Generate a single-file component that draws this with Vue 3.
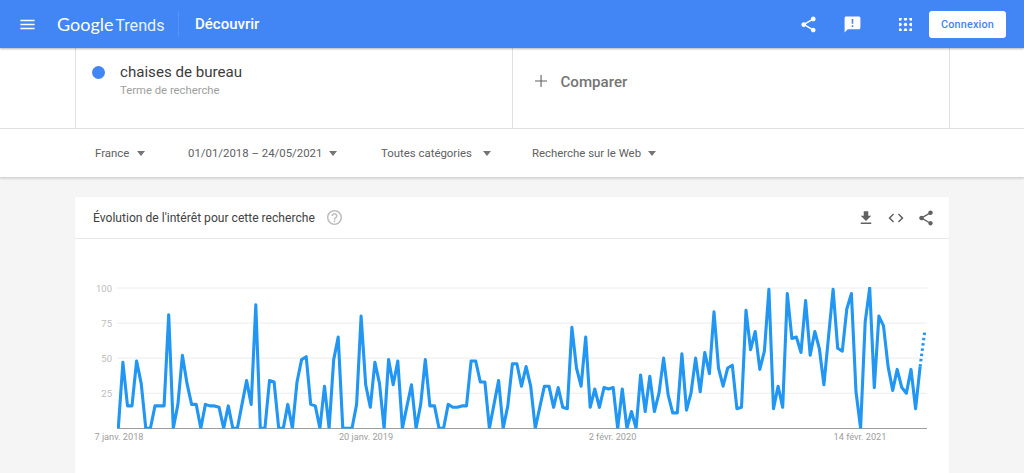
<script setup>
import { computed } from 'vue'

// weekly interest values, read off the chart
const values = [
  0, 47, 16, 16, 48, 32, 0, 0, 16, 16, 16, 81, 0, 17, 52, 32, 17, 17, 0, 17,
  16, 16, 15, 0, 16, 0, 0, 17, 34, 17, 88, 0, 0, 34, 33, 0, 0, 17, 0, 33,
  49, 51, 17, 16, 0, 30, 0, 49, 65, 0, 0, 0, 17, 80, 31, 15, 47, 32, 0, 49,
  31, 48, 0, 16, 31, 0, 17, 49, 16, 16, 0, 0, 17, 15, 15, 16, 16, 48, 48, 33,
  33, 0, 17, 34, 0, 16, 46, 46, 30, 44, 30, 0, 15, 30, 30, 15, 29, 15, 14, 72,
  43, 30, 65, 15, 28, 15, 29, 28, 29, 0, 28, 0, 12, 0, 38, 12, 37, 12, 25, 50,
  24, 11, 11, 53, 13, 25, 50, 26, 54, 39, 83, 43, 30, 43, 45, 14, 15, 84, 56, 69,
  42, 55, 99, 14, 30, 15, 96, 64, 65, 54, 91, 52, 69, 57, 31, 65, 99, 57, 55, 85,
  96, 26, 0, 76, 100, 29, 80, 73, 44, 27, 42, 29, 25, 42, 14, 44, 69,
]

const filters = ['France', '01/01/2018 – 24/05/2021', 'Toutes catégories', 'Recherche sur le Web']
const yTicks = [100, 75, 50, 25]
const xTicks = [
  { label: '7 janv. 2018', x: 119 },
  { label: '20 janv. 2019', x: 366 },
  { label: '2 févr. 2020', x: 612.5 },
  { label: '14 févr. 2021', x: 860 },
]

const yFor = (v) => 428.3 - v * 1.403
const toPoint = (v, i) => `${(118.3 + i * 4.582).toFixed(1)},${yFor(v).toFixed(1)}`

const solidLine = computed(() => values.slice(0, -1).map(toPoint).join(' '))
const partialLine = computed(() => {
  const last = values.length - 1
  return [toPoint(values[last - 1], last - 1), toPoint(values[last], last)].join(' ')
})
</script>

<template>
  <div class="page">
    <header class="topbar">
      <svg class="menu-icon" viewBox="0 0 24 24"><path d="M3 18h18v-2H3v2zm0-5h18v-2H3v2zm0-7v2h18V6H3z" /></svg>
      <div class="logo"><span class="logo-google">Google</span> <span class="logo-trends">Trends</span></div>
      <span class="divider"></span>
      <span class="page-title">Découvrir</span>
      <div class="top-actions">
        <svg class="top-icon share" viewBox="0 0 24 24"><path d="M18 16.08c-.76 0-1.44.3-1.96.77L8.91 12.7c.05-.23.09-.46.09-.7s-.04-.47-.09-.7l7.05-4.11c.54.5 1.25.81 2.04.81 1.66 0 3-1.34 3-3s-1.34-3-3-3-3 1.34-3 3c0 .24.04.47.09.7L8.04 9.81C7.5 9.31 6.79 9 6 9c-1.66 0-3 1.34-3 3s1.34 3 3 3c.79 0 1.5-.31 2.04-.81l7.12 4.16c-.05.21-.08.43-.08.65 0 1.61 1.31 2.92 2.92 2.92 1.61 0 2.92-1.31 2.92-2.92s-1.31-2.92-2.92-2.92z" /></svg>
        <svg class="top-icon feedback" viewBox="0 0 24 24"><path d="M20 2H4c-1.1 0-1.99.9-1.99 2L2 22l4-4h14c1.1 0 2-.9 2-2V4c0-1.1-.9-2-2-2zm-7 9h-2V5h2v6zm0 4h-2v-2h2v2z" /></svg>
        <svg class="top-icon apps" viewBox="0 0 12 12">
          <template v-for="row in 3" :key="row">
            <circle v-for="col in 3" :key="col" :cx="col * 5 - 4" :cy="row * 5 - 4" r="1.6" />
          </template>
        </svg>
        <button class="login">Connexion</button>
      </div>
    </header>

    <section class="search-panel">
      <div class="search-row">
        <div class="term">
          <span class="term-dot"></span>
          <div>
            <div class="term-name">chaises de bureau</div>
            <div class="term-type">Terme de recherche</div>
          </div>
        </div>
        <div class="compare">
          <svg class="plus" viewBox="0 0 12 12"><path d="M5.5 0h1.1v5.5H12v1.1H6.6V12H5.5V6.6H0V5.5h5.5z" /></svg>
          <span>Comparer</span>
        </div>
      </div>
      <div class="filters">
        <div v-for="f in filters" :key="f" class="filter">
          <span>{{ f }}</span>
          <i class="caret"></i>
        </div>
      </div>
    </section>

    <main class="content">
      <section class="card">
        <div class="card-head">
          <span class="card-title">Évolution de l'intérêt pour cette recherche</span>
          <svg class="help" viewBox="2 2 20 20"><path d="M11 18h2v-2h-2v2zm1-16C6.48 2 2 6.48 2 12s4.48 10 10 10 10-4.48 10-10S17.52 2 12 2zm0 18c-4.41 0-8-3.59-8-8s3.59-8 8-8 8 3.59 8 8-3.59 8-8 8zm0-14c-2.21 0-4 1.79-4 4h2c0-1.1.9-2 2-2s2 .9 2 2c0 2-3 1.75-3 5h2c0-2.25 3-2.5 3-5 0-2.21-1.79-4-4-4z" /></svg>
          <div class="card-actions">
            <svg class="card-icon" viewBox="0 0 24 24"><path d="M19 9h-4V3H9v6H5l7 7 7-7zM5 18v2h14v-2H5z" /></svg>
            <svg class="card-icon" viewBox="0 0 24 24"><path d="M9.4 16.6 4.8 12l4.6-4.6L8 6l-6 6 6 6 1.4-1.4zm5.2 0 4.6-4.6-4.6-4.6L16 6l6 6-6 6-1.4-1.4z" /></svg>
            <svg class="card-icon" viewBox="0 0 24 24"><path d="M18 16.08c-.76 0-1.44.3-1.96.77L8.91 12.7c.05-.23.09-.46.09-.7s-.04-.47-.09-.7l7.05-4.11c.54.5 1.25.81 2.04.81 1.66 0 3-1.34 3-3s-1.34-3-3-3-3 1.34-3 3c0 .24.04.47.09.7L8.04 9.81C7.5 9.31 6.79 9 6 9c-1.66 0-3 1.34-3 3s1.34 3 3 3c.79 0 1.5-.31 2.04-.81l7.12 4.16c-.05.21-.08.43-.08.65 0 1.61 1.31 2.92 2.92 2.92 1.61 0 2.92-1.31 2.92-2.92s-1.31-2.92-2.92-2.92z" /></svg>
          </div>
        </div>
        <!-- viewBox uses page coordinates so the readings above stay comparable -->
        <svg class="chart" viewBox="75 239 874 234">
          <defs>
            <clipPath id="plot"><rect x="117" y="287" width="811" height="141.5" /></clipPath>
          </defs>
          <g v-for="t in yTicks" :key="t">
            <line x1="117" x2="927" :y1="yFor(t)" :y2="yFor(t)" class="grid" />
            <text x="112" :y="yFor(t) + 3.5" text-anchor="end" class="y-label">{{ t }}</text>
          </g>
          <line x1="117" x2="927" y1="428.5" y2="428.5" class="axis" />
          <g clip-path="url(#plot)">
            <polyline :points="solidLine" class="trend" />
            <polyline :points="partialLine" class="trend partial" />
          </g>
          <text v-for="t in xTicks" :key="t.label" :x="t.x" y="439.5" text-anchor="middle" class="x-label">{{ t.label }}</text>
        </svg>
      </section>
    </main>
  </div>
</template>

<style>
html,
body {
  margin: 0;
  overflow: hidden;
}
</style>

<style scoped>
.page {
  height: 100vh;
  display: flex;
  flex-direction: column;
  overflow: hidden;
  background: #f5f5f5;
  font-family: Roboto, 'Liberation Sans', sans-serif;
}

.topbar {
  position: relative;
  z-index: 2;
  flex: none;
  height: 48px;
  display: flex;
  align-items: center;
  background: #4285f4;
  box-shadow: 0 1px 2px rgba(0, 0, 0, 0.3);
  color: #fff;
}

.menu-icon {
  width: 19px;
  height: 19px;
  margin-left: 18px;
  fill: #fff;
}

.logo {
  margin-left: 20px;
  width: 107px;
  font-family: Lato, sans-serif;
  font-size: 18px;
  white-space: nowrap;
}

.logo-trends {
  margin-left: -3px;
  font-family: Roboto, sans-serif;
  font-size: 16.2px;
  opacity: 0.9;
}

.divider {
  width: 1px;
  height: 24px;
  margin-left: 14px;
  background: rgba(255, 255, 255, 0.12);
}

.page-title {
  margin-left: 16px;
  margin-top: -1px;
  font-size: 15px;
  font-weight: 500;
}

.top-actions {
  margin-left: auto;
  padding-right: 18px;
  display: flex;
  align-items: center;
}

.top-icon {
  fill: #fff;
}

.top-icon.share {
  width: 19px;
  height: 19px;
}

.top-icon.feedback {
  width: 19px;
  height: 19px;
  margin-left: 25px;
}

.top-icon.apps {
  width: 13px;
  height: 13px;
  margin-left: 37px;
}

.login {
  width: 77px;
  height: 27px;
  margin-left: 17px;
  padding: 0;
  border: 0;
  border-radius: 3px;
  background: #fff;
  color: #4285f4;
  font: 500 10.8px Roboto, sans-serif;
  letter-spacing: 0.2px;
}

.search-panel {
  position: relative;
  flex: none;
  background: #fff;
  border-bottom: 1px solid #d6d6d6;
  box-shadow: 0 1px 2px rgba(0, 0, 0, 0.12);
}

.search-row {
  height: 80px;
  margin: 0 74px 0 75px;
  display: grid;
  grid-template-columns: 1fr 1fr;
  border-left: 1px solid #e0e0e0;
  border-right: 1px solid #e0e0e0;
}

.term {
  display: flex;
  align-items: flex-start;
  padding: 15px 0 0 16px;
  border-right: 1px solid #e0e0e0;
}

.term-dot {
  width: 13px;
  height: 13px;
  margin-top: 3px;
  margin-right: 15px;
  border-radius: 50%;
  background: #4285f4;
}

.term-name {
  font-size: 15.1px;
  line-height: 19px;
  color: #3c3c3c;
}

.term-type {
  margin-top: 2px;
  font-size: 11.3px;
  line-height: 14px;
  color: #9e9e9e;
}

.compare {
  display: flex;
  align-items: flex-start;
  padding: 25px 0 0 22px;
  font-size: 15.1px;
  line-height: 19px;
  font-weight: 500;
  color: #757575;
}

.plus {
  width: 12px;
  height: 12px;
  margin-top: 2px;
  margin-right: 14px;
  fill: #616161;
}

.filters {
  height: 48px;
  padding-left: 95px;
  display: grid;
  grid-template-columns: 93px 193px 151px auto;
  align-items: center;
  border-top: 1px solid #e0e0e0;
  font-size: 11.4px;
  color: #616161;
}

.filter {
  display: flex;
  align-items: center;
  gap: 7px;
}

.filter:first-child {
  gap: 8px;
}

.filter:nth-child(3) {
  gap: 11px;
}

.caret {
  width: 0;
  height: 0;
  border-left: 4.5px solid transparent;
  border-right: 4.5px solid transparent;
  border-top: 5px solid #757575;
}

.content {
  flex: 1;
  min-height: 0;
  padding: 19px 75px 0;
}

.card {
  background: #fff;
  height: 100%;
  box-shadow: 0 0 1px rgba(0, 0, 0, 0.06);
}

.card-head {
  height: 41px;
  padding: 0 14px 0 18px;
  display: flex;
  align-items: center;
  border-bottom: 1px solid #e8e8e8;
}

.card-title {
  font-size: 12.1px;
  color: #424242;
}

.help {
  width: 15px;
  height: 15px;
  margin-left: 12px;
  fill: #bdbdbd;
}

.card-actions {
  margin-left: auto;
  display: flex;
  gap: 12px;
}

.card-icon {
  width: 18px;
  height: 18px;
  fill: #616161;
}

.chart {
  display: block;
  width: 874px;
  height: 234px;
}

.grid {
  stroke: #ececec;
  stroke-width: 1;
}

.axis {
  stroke: #9e9e9e;
  stroke-width: 1;
}

.trend {
  fill: none;
  stroke: #2196f3;
  stroke-width: 3.1;
  stroke-linejoin: round;
}

.trend.partial {
  stroke-dasharray: 2.5 2.8;
}

.y-label {
  font: 9.5px Roboto, sans-serif;
  fill: #bdbdbd;
}

.x-label {
  font: 9.2px Roboto, sans-serif;
  fill: #9e9e9e;
}
</style>
